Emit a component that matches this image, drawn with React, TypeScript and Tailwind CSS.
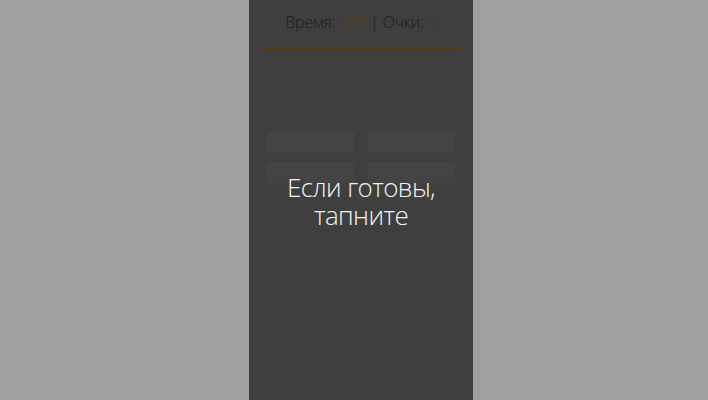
function Tile() {
  return <div className="h-[21px] bg-[#444444]" />;
}

export default function App() {
  return (
    <div
      className="flex h-[400px] w-[708px] bg-[#a0a0a0]"
      style={{ fontFamily: '"Open Sans", "Noto Sans", sans-serif' }}
    >
      <div className="relative ml-[249px] flex h-full w-[224px] flex-col bg-[#3f3f3f]">
        <div className="flex h-[42px] items-center justify-center pt-[2px] text-[16px] font-light tracking-[-0.2px] text-[#1c1c1c]">
          <span>Время:&nbsp;</span>
          <span className="text-[#5c3c0c]">100</span>
          <span>&nbsp;|&nbsp;Очки:&nbsp;</span>
          <span className="text-[#2c4a2c]">0</span>
        </div>
        <div className="mx-[12px] mt-[6px] h-[2px] bg-[#5a3a08]" />
        <div className="mt-[81px] grid grid-cols-2 gap-x-[13px] gap-y-[10px] px-[18px]">
          <Tile />
          <Tile />
          <Tile />
          <Tile />
        </div>
        <div className="absolute inset-x-0 top-[173px] text-center text-[26px] font-light leading-[28px] tracking-[-0.6px] text-[#f2f2f2]">
          Если готовы,
          <br />
          тапните
        </div>
      </div>
    </div>
  );
}
